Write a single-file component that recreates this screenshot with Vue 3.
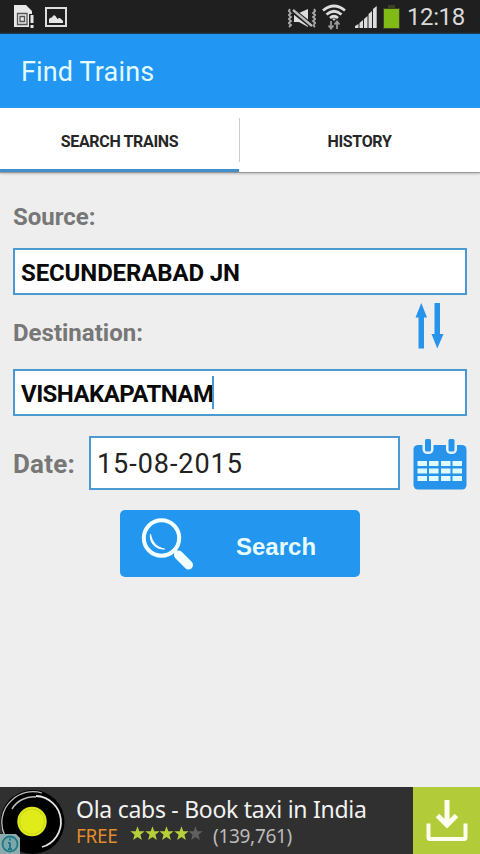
<script setup>
import { ref } from 'vue'

const source = ref('SECUNDERABAD JN')
const destination = ref('VISHAKAPATNAM')
const date = ref('15-08-2015')
const rating = 4
const columns = [4.5, 16, 28, 39.5]
const rows = [22, 29.5, 37]
</script>

<template>
  <div class="screen">
    <header class="status">
      <svg class="sim" width="20" height="24" viewBox="0 0 20 24">
        <path d="M0 0H12L18 6V9H16V22H0Z" fill="#e8e8e8" />
        <path d="M3.500 8.500H13V19.500H3.500Z M6 11.500H10.500V16.500H6Z" fill="none" stroke="#555" stroke-width="1.300" />
        <path d="M15 9H20V24H15Z" fill="#1f1f1f" />
        <path d="M16.500 10H19.500V18H16.500Z M16.500 20H19.500V23H16.500Z" fill="#e8e8e8" />
      </svg>
      <svg width="22" height="20" viewBox="0 0 22 20">
        <rect x="1" y="1" width="20" height="18" fill="#1f1f1f" stroke="#ddd" stroke-width="2" />
        <path d="M4 16V12Q5.500 10 7 10.500Q8.500 7 10.500 9L12.500 12Q14.500 10 16 12L18 14V16Z" fill="#e5e5e5" />
      </svg>
      <span class="grow"></span>
      <svg class="mute" width="28" height="20" viewBox="0 0 28 20">
        <path d="M2 1L0.800 3L3 5L0.800 7L3 9L0.800 11L3 13L0.800 15L3 17L1 19M26 1L27.200 3L25 5L27.200 7L25 9L27.200 11L25 13L27.200 15L25 17L27 19" fill="none" stroke="#aaa" stroke-width="1.800" />
        <path d="M6 5H11L20 1V19L11 14H6Z" fill="#ddd" />
        <path d="M4 2L24 18" stroke="#1f1f1f" stroke-width="5" />
        <path d="M5 2L24 18" stroke="#bbb" stroke-width="2.400" />
      </svg>
      <svg class="wifi" width="24" height="26" viewBox="0 0 24 26">
        <g fill="none" stroke="#ddd" stroke-width="2.700">
          <path d="M1 6.500Q12 -2.500 23 6.500" />
          <path d="M4.500 10.500Q12 4 19.500 10.500" />
          <path d="M8 14Q12 10.500 16 14" />
        </g>
        <path d="M10 14.500H14L12 17Z" fill="#ddd" />
        <path d="M9 17V24M6.500 21.500L9 24.500L11.500 21.500M15 25V18M12.500 20.500L15 17.500L17.500 20.500" fill="none" stroke="#999" stroke-width="1.800" />
      </svg>
      <svg class="signal" width="22" height="22" viewBox="0 0 22 22">
        <path d="M0 22V20L3.500 18V22ZM4.500 22V17L8 14V22ZM9 22V13L12.500 10V22ZM13.500 22V8L17 5V22ZM18 22V3L21.700 0V22Z" fill="#ddd" />
      </svg>
      <svg class="battery" width="17" height="24" viewBox="0 0 17 24">
        <path d="M5 0H12V3H17V24H0V3H5Z" fill="#3b4026" />
        <path d="M1 4H16V23H1Z" fill="#80ba16" />
      </svg>
      <time class="clock">12:18</time>
    </header>

    <h1 class="title"><span>Find Trains</span></h1>

    <nav class="tabs">
      <a class="tab active"><span>SEARCH TRAINS</span></a>
      <i class="divider"></i>
      <a class="tab"><span class="history">HISTORY</span></a>
    </nav>

    <main class="form">
      <div class="label-row first"><span class="label source">Source:</span></div>
      <div class="field"><span class="from">{{ source }}</span></div>
      <div class="label-row second">
        <span class="label destination">Destination:</span>
        <svg class="swap" width="30" height="46" viewBox="0 0 30 46">
          <path d="M6.300 0L12 14.500H9V45.500H3.500V14.500H0.500Z M19.500 0H25V31H28.500L22.300 45.500L16.500 31H19.500Z" fill="#2793ea" />
        </svg>
      </div>
      <div class="field"><span class="to">{{ destination }}</span><i class="caret"></i></div>
      <div class="date-row">
        <span class="date-label">Date:</span>
        <div class="date-field"><span>{{ date }}</span></div>
        <svg width="54" height="51" viewBox="0 0 54 51">
          <rect x="0.500" y="6" width="53" height="44.500" rx="4.500" fill="#2793ea" />
          <g fill="#e8f6fb">
            <path d="M9.500 5H20.500V10Q20.500 15 15 15Q9.500 15 9.500 10Z" />
            <path d="M33 5H44V10Q44 15 38.500 15Q33 15 33 10Z" />
          </g>
          <g fill="#2793ea">
            <rect x="12" y="0" width="6" height="12.500" rx="1.500" />
            <rect x="35.500" y="0" width="6" height="12.500" rx="1.500" />
          </g>
          <template v-for="y in rows" :key="y">
            <rect v-for="x in columns" :key="x" :x="x" :y="y" width="9.500" height="5" fill="#e0fbff" />
          </template>
        </svg>
      </div>
      <button class="search">
        <svg width="54" height="54" viewBox="0 0 54 54">
          <circle cx="20.500" cy="20" r="17.700" fill="none" stroke="#f4ffff" stroke-width="4" />
          <path d="M9.500 16C8 24 14 31.500 23.500 31C16 29.500 11 24.500 9.500 16Z" fill="#f4ffff" stroke="#f4ffff" />
          <path d="M32 31L37 36" stroke="#f4ffff" stroke-width="4" />
          <path d="M37.500 37L47.500 47" stroke="#f4ffff" stroke-width="9" stroke-linecap="round" />
        </svg>
        <span>Search</span>
      </button>
    </main>

    <aside class="ad">
      <div class="logo">
        <svg width="65" height="67" viewBox="0 0 65 67">
          <circle cx="32.500" cy="35" r="32" fill="#000" />
          <path d="M5 49A30 30 0 0 1 12 13A30 30 0 0 1 42 6" fill="none" stroke="#bbb" stroke-width="1.300" />
          <path d="M12 22A25 25 0 0 1 36 10" fill="none" stroke="#bbb" stroke-width="1.500" />
          <path d="M36 9A26 26 0 0 1 42 60" fill="none" stroke="#e5e5e5" stroke-width="1.800" />
          <circle cx="32" cy="34.500" r="14.700" fill="#e1eb19" />
          <circle cx="32" cy="34.500" r="12.500" fill="none" stroke="#c8d319" />
        </svg>
        <svg class="info" width="20" height="20" viewBox="0 0 20 20">
          <path d="M0 0H16L20 4V20H0Z" fill="#8dabad" />
          <circle cx="10" cy="10" r="7.500" fill="#7ba6ab" stroke="#207b89" stroke-width="1.800" />
          <path d="M10 8.500V15M8 9H10M10 4.500V6.500M8 15H12" stroke="#207b89" stroke-width="2" />
        </svg>
      </div>
      <div class="copy">
        <div class="ad-title">Ola cabs - Book taxi in India</div>
        <div class="meta">
          <span class="free">FREE</span>
          <span class="stars">
            <svg v-for="n in 5" :key="n" width="14.600" height="15" viewBox="0 0 14.600 15">
              <path d="M7.500 0.200L9.300 5.300H14.600L10.400 8.700L11.900 14L7.500 10.900L3.100 14L4.600 8.700L0.400 5.300H5.700Z" :fill="n <= rating ? '#b5d03b' : '#606060'" />
            </svg>
          </span>
          <span class="count">(139,761)</span>
        </div>
      </div>
      <div class="download">
        <svg width="42" height="42" viewBox="0 0 42 42">
          <path d="M2.500 23.500V37.500Q2.500 39 4 39H38Q39.500 39 39.500 37.500V23.500" fill="none" stroke="#fffff0" stroke-width="4" />
          <path d="M21 0V23M11.500 15.500L21 25L30.500 15.500" fill="none" stroke="#fffff0" stroke-width="5" />
        </svg>
      </div>
    </aside>
  </div>
</template>

<style>
body {
  margin: 0;
}
</style>

<style scoped>
* {
  box-sizing: border-box;
}
.screen {
  width: 480px;
  height: 854px;
  display: flex;
  flex-direction: column;
  background: #eee;
  font-family: Roboto, sans-serif;
  white-space: nowrap;
  overflow: hidden;
}
svg {
  display: block;
  flex: none;
}
.status {
  height: 34px;
  flex: none;
  display: flex;
  align-items: flex-start;
  padding: 5px 0 0 14px;
  background: linear-gradient(#1f1f1f 32px, #174061);
}
.sim {
  margin-right: 11px;
}
.sim + svg {
  margin-top: 2px;
}
.grow {
  flex: 1;
}
.mute {
  margin: 3px 6px 0 0;
}
.wifi {
  margin: -1px 9px 0 0;
}
.signal {
  margin: 1px 6px 0 0;
}
.battery {
  margin-right: 7px;
}
.clock {
  width: 73px;
  margin-top: -5px;
  color: #d9d9d9;
  font-size: 24px;
  line-height: 35px;
  letter-spacing: -0.400px;
}
.title {
  height: 74px;
  flex: none;
  margin: 0;
  padding-left: 21px;
  background: #2196f3;
  color: #e2fbff;
  font-size: 27px;
  font-weight: 400;
  line-height: 77px;
  letter-spacing: 0.150px;
}
.tabs {
  height: 65px;
  flex: none;
  display: flex;
  background: #fff;
  border-bottom: 1px solid #999;
  box-shadow: 0 1px 2px #bbb;
}
.tab {
  width: 239px;
  border-bottom: 3px solid transparent;
  color: #262626;
  font-size: 16px;
  font-weight: 700;
  line-height: 67px;
  letter-spacing: -0.350px;
  text-align: center;
}
.tab.active {
  border-color: #438fcb;
}
.divider {
  width: 1px;
  height: 44px;
  margin-top: 10px;
  background: #ccc;
}
.form {
  flex: 1;
  padding: 0 13px;
}
.label-row {
  display: flex;
  justify-content: space-between;
  color: #777;
  font-size: 24px;
  font-weight: 700;
}
.first {
  height: 75px;
  line-height: 88px;
}
.second {
  height: 74px;
  line-height: 77px;
}
.swap {
  margin: 8px 22px 0 0;
}
.field {
  display: flex;
  align-items: center;
  height: 47px;
  padding: 3px 0 0 6px;
  border: 2px solid #4b9bd2;
  background: #fff;
  color: #0a0a0a;
  font-size: 24px;
  font-weight: 700;
}
.from {
  letter-spacing: -0.120px;
}
.to {
  letter-spacing: -0.550px;
}
.caret {
  width: 2px;
  height: 33px;
  margin: -4px 0 0 -1px;
  background: #4a9ad2;
}
.date-row {
  display: flex;
  height: 54px;
  margin-top: 20px;
}
.date-label {
  width: 76px;
  color: #777;
  font-size: 26px;
  font-weight: 700;
  line-height: 56px;
  letter-spacing: 0.200px;
}
.date-field {
  width: 311px;
  margin-right: 13px;
  padding-left: 6px;
  border: 2px solid #4b9bd2;
  background: #fff;
  color: #222;
  font-size: 27px;
  line-height: 53px;
  letter-spacing: 0.950px;
}
.date-row svg {
  margin-top: 3px;
}
.search {
  display: flex;
  align-items: flex-start;
  width: 240px;
  height: 67px;
  margin: 20px 0 0 107px;
  padding: 8px 0 0 21px;
  border: 0;
  border-radius: 5px;
  background: #2396ef;
  color: #e7fcff;
  font: 700 24px/57px 'Liberation Sans', sans-serif;
}
.search span {
  margin-left: 41px;
}
.ad {
  display: flex;
  flex: none;
  height: 67px;
  background: #303030;
  font-family: 'Noto Sans', sans-serif;
}
.logo {
  position: relative;
  width: 76px;
}
.info {
  position: absolute;
  left: 0;
  bottom: 0;
}
.copy {
  width: 337px;
}
.ad-title {
  height: 38px;
  color: #f2f2f2;
  font-size: 23px;
  line-height: 45px;
  letter-spacing: -0.280px;
}
.meta {
  display: flex;
  height: 24px;
  font-size: 19px;
  line-height: 23px;
  letter-spacing: -0.300px;
}
.free {
  width: 54px;
  color: #e18b2b;
}
.stars {
  display: flex;
  width: 83px;
  padding-top: 1px;
}
.count {
  color: #bbb;
}
.download {
  width: 67px;
  padding: 13px 0 0 13px;
  background: #b1cc38;
}
</style>
